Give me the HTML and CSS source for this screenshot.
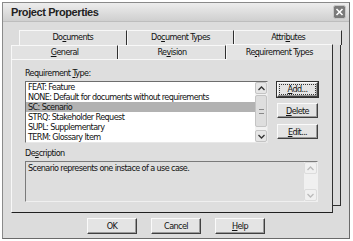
FILE: index.html
```html
<!DOCTYPE html>
<html lang="en">
<head>
    <meta charset="UTF-8">
    <title>Project Properties</title>
    <link rel="stylesheet" href="styles.css">
</head>
<body>

    <div class="window">
        <div class="titlebar">
            <span class="title">Project Properties</span>
            <span class="close">
                <svg width="13" height="14" viewBox="0 0 13 14">
                    <rect x="0.5" y="0.5" width="12" height="13" rx="2" fill="#7a7a7a" stroke="#c8c8c8"/>
                    <path d="M3.5 4 L9.5 10 M9.5 4 L3.5 10" stroke="#fff" stroke-width="1.6"/>
                </svg>
            </span>
        </div>

        <div class="content">
            <div class="sheet">
                <div class="tabrow back">
                    <div class="tab">Do<u>c</u>uments</div>
                    <div class="tab">Do<u>c</u>ument Types</div>
                    <div class="tab">Attri<u>b</u>utes</div>
                </div>
                <div class="tabrow front">
                    <div class="tab"><u>G</u>eneral</div>
                    <div class="tab">Re<u>v</u>ision</div>
                    <div class="tab selected">Re<u>q</u>uirement Types</div>
                </div>

                <div class="panel">
                    <div class="label">Requirement <u>T</u>ype:</div>
                    <div class="typerow">
                        <div class="listbox">
                            <div class="items">
                                <div class="item">FEAT: Feature</div>
                                <div class="item">NONE: Default for documents without requirements</div>
                                <div class="item active">SC: Scenario</div>
                                <div class="item">STRQ: Stakeholder Request</div>
                                <div class="item">SUPL: Supplementary</div>
                                <div class="item">TERM: Glossary Item</div>
                            </div>
                            <div class="scrollbar">
                                <div class="arrow">
                                    <svg width="7" height="5" viewBox="0 0 7 5"><path d="M0.5 4 L3.5 1 L6.5 4" fill="none" stroke="#333" stroke-width="1.3"/></svg>
                                </div>
                                <div class="thumb"><span class="grip"></span></div>
                                <div class="track"></div>
                                <div class="arrow">
                                    <svg width="7" height="5" viewBox="0 0 7 5"><path d="M0.5 1 L3.5 4 L6.5 1" fill="none" stroke="#333" stroke-width="1.3"/></svg>
                                </div>
                            </div>
                        </div>
                        <div class="sidebuttons">
                            <button class="btn default"><span class="focus"><u>A</u>dd...</span></button>
                            <button class="btn"><u>D</u>elete</button>
                            <button class="btn"><u>E</u>dit...</button>
                        </div>
                    </div>

                    <div class="label desc-label">De<u>s</u>cription</div>
                    <div class="descbox">
                        <div class="desctext">Scenario represents one instace of a use case.</div>
                        <div class="scrollbar off">
                            <div class="arrow">
                                <svg width="7" height="5" viewBox="0 0 7 5"><path d="M0.5 4 L3.5 1 L6.5 4" fill="none" stroke="#bbb" stroke-width="1.3"/></svg>
                            </div>
                            <div class="track"></div>
                            <div class="arrow">
                                <svg width="7" height="5" viewBox="0 0 7 5"><path d="M0.5 1 L3.5 4 L6.5 1" fill="none" stroke="#bbb" stroke-width="1.3"/></svg>
                            </div>
                        </div>
                    </div>
                </div>
            </div>

            <div class="bottombuttons">
                <button class="btn wide">OK</button>
                <button class="btn wide">Cancel</button>
                <button class="btn wide"><u>H</u>elp</button>
            </div>
        </div>
    </div>

</body>
</html>
```

FILE: styles.css
```css
body {
    margin: 0;
    background-color: #ffffff;
    font-family: "DejaVu Sans Condensed", "Liberation Sans", sans-serif;
    font-size: 9px;
    letter-spacing: -0.6px;
    color: #111;
}
u {
    text-decoration-thickness: 1px;
}
.window {
    margin: 2px 0 0 2px;
    width: 348px;
    height: 237px;
    box-sizing: border-box;
    border: 1px solid #8a8a8a;
    border-right-color: #6a6a6a;
    border-bottom-color: #6a6a6a;
    background-color: #dcdcdc;
}
.titlebar {
    height: 18px;
    display: flex;
    align-items: center;
    justify-content: space-between;
    padding: 0 3px 0 8px;
    background: linear-gradient(#ededed, #cfcfcf);
    border-bottom: 1px solid #bdbdbd;
}
.title {
    font-family: "Liberation Sans", sans-serif;
    font-weight: bold;
    font-size: 11px;
    letter-spacing: -0.4px;
    color: #222;
}
.close {
    display: flex;
}
.content {
    padding: 8px 0 0 8px;
}
.sheet {
    position: relative;
    width: 322px;
    z-index: 0;
}
.sheet::before {
    content: "";
    position: absolute;
    left: 8px;
    right: -8px;
    top: 15px;
    bottom: 7px;
    border-right: 1px solid #303030;
    border-bottom: 1px solid #303030;
    z-index: -1;
}
.tabrow {
    display: flex;
}
.tabrow.back {
    margin-left: 8px;
    width: 323px;
    height: 15px;
}
.tabrow.front {
    height: 14px;
}
.tab {
    flex: 1;
    box-sizing: border-box;
    text-align: center;
    line-height: 13px;
    border-top: 1px solid #f8f8f8;
    border-left: 1px solid #f8f8f8;
    border-right: 1px solid #303030;
    background-color: #e2e2e2;
}
.tab.selected {
    margin-top: -1px;
    height: 16px;
    line-height: 14px;
    background-color: #e4e4e4;
    position: relative;
    z-index: 1;
}
.panel {
    height: 154px;
    box-sizing: border-box;
    padding: 8px 0 0 13px;
    background-color: #dedede;
    border-top: 1px solid #f8f8f8;
    border-left: 1px solid #f8f8f8;
    border-right: 1px solid #303030;
    border-bottom: 1px solid #202020;
}
.label {
    line-height: 11px;
}
.typerow {
    display: flex;
    margin-top: 2px;
}
.listbox {
    display: flex;
    width: 243px;
    height: 62px;
    box-sizing: border-box;
    border: 1px solid #6e6e6e;
    border-right-color: #e8e8e8;
    border-bottom-color: #e8e8e8;
    background-color: #fff;
}
.items {
    flex: 1;
}
.item {
    height: 10px;
    line-height: 10px;
    padding-left: 2px;
    white-space: nowrap;
    overflow: hidden;
}
.item.active {
    background-color: #b2b2b2;
}
.scrollbar {
    width: 12px;
    display: flex;
    flex-direction: column;
    background-color: #f2f2f2;
}
.arrow {
    height: 12px;
    display: flex;
    align-items: center;
    justify-content: center;
    background-color: #e6e6e6;
    border: 1px solid #c4c4c4;
    box-sizing: border-box;
    border-radius: 2px;
}
.thumb {
    height: 30px;
    margin-top: 1px;
    display: flex;
    align-items: center;
    justify-content: center;
    background-color: #dedede;
    border: 1px solid #c4c4c4;
    border-radius: 2px;
}
.grip {
    width: 5px;
    height: 3px;
    border-top: 1px solid #888;
    border-bottom: 1px solid #888;
}
.track {
    flex: 1;
}
.sidebuttons {
    margin-left: 9px;
    display: flex;
    flex-direction: column;
    gap: 6px;
    padding-top: 1px;
}
.btn {
    width: 41px;
    height: 15px;
    padding: 0;
    box-sizing: border-box;
    font-family: inherit;
    font-size: 9px;
    letter-spacing: inherit;
    color: #111;
    background-color: #e4e4e4;
    border: 1px solid #fafafa;
    border-right-color: #404040;
    border-bottom-color: #404040;
    box-shadow: inset -1px -1px #9a9a9a;
}
.btn.default {
    outline: 1px solid #303030;
    display: flex;
    padding: 1px;
}
.focus {
    flex: 1;
    border: 1px dotted #333;
    line-height: 9px;
}
.desc-label {
    margin-top: 5px;
}
.descbox {
    display: flex;
    margin-top: 2px;
    width: 293px;
    height: 41px;
    box-sizing: border-box;
    border: 1px solid #7a7a7a;
    border-right-color: #f0f0f0;
    border-bottom-color: #f0f0f0;
    background-color: #dedede;
}
.desctext {
    flex: 1;
    padding: 1px 2px;
}
.scrollbar.off {
    width: 13px;
    background-color: #f0f0f0;
}
.scrollbar.off .arrow {
    background-color: #f0f0f0;
    border-color: #dcdcdc;
}
.bottombuttons {
    display: flex;
    gap: 14px;
    margin: 5px 0 0 76px;
}
.btn.wide {
    width: 50px;
    height: 16px;
}
```
